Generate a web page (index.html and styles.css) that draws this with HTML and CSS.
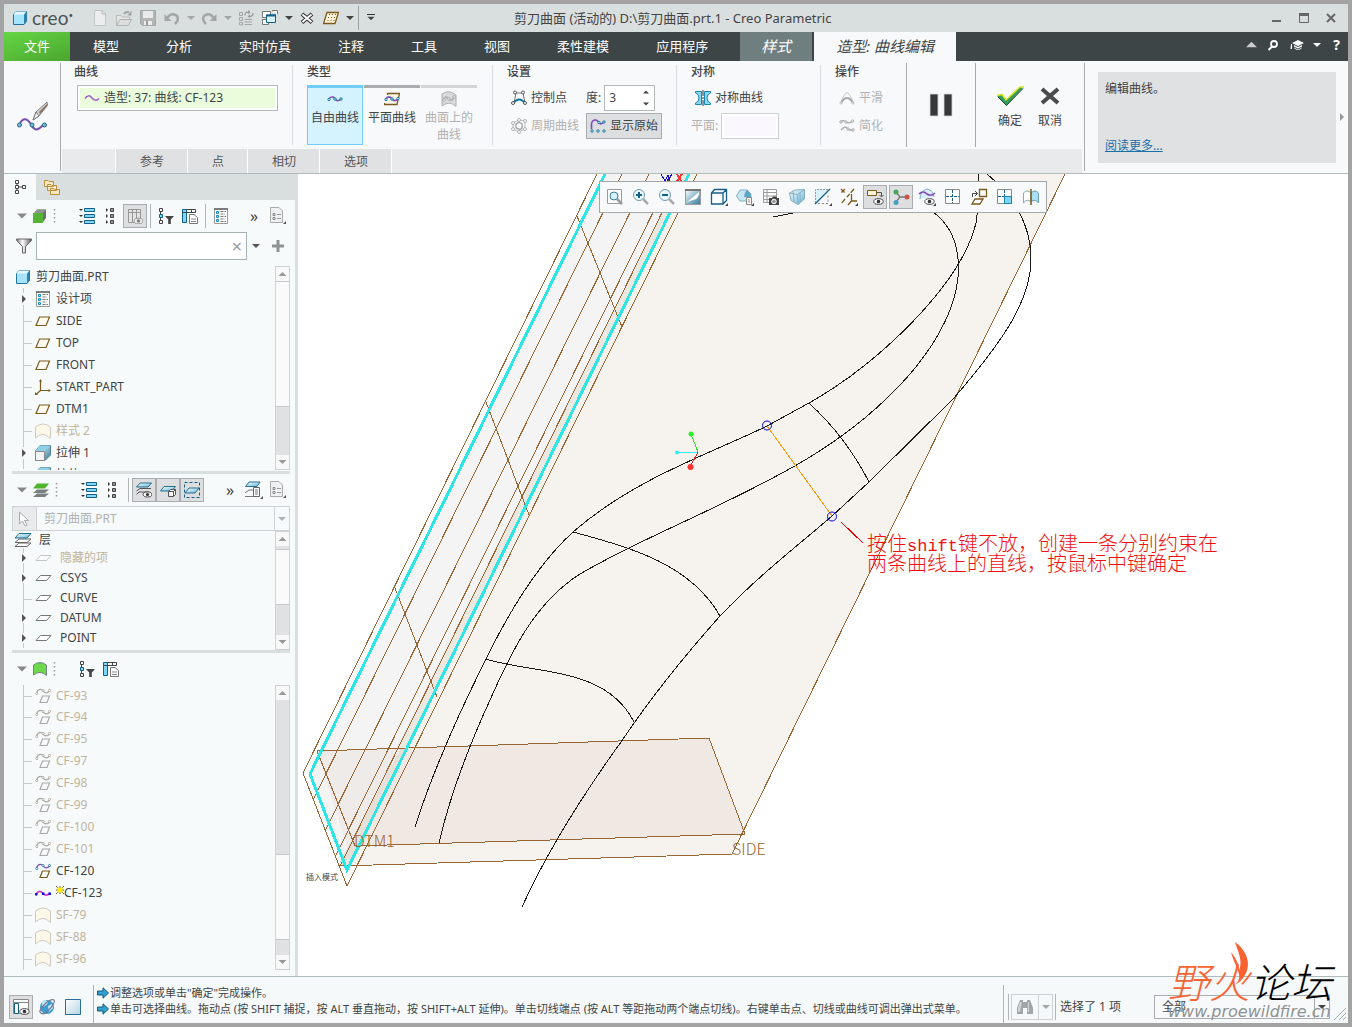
FILE: index.html
```html
<!DOCTYPE html>
<html lang="zh-CN">
<head>
    <meta charset="utf-8">
    <title>剪刀曲面 (活动的) D:\剪刀曲面.prt.1 - Creo Parametric</title>
    <link rel="stylesheet" href="styles.css">
</head>
<body>
    <!-- icon set -->
    <svg class="defs" aria-hidden="true">
        <defs>
            <linearGradient id="g-blue" x1="0" y1="0" x2="1" y2="1"><stop offset="0" stop-color="#fff"/><stop offset="1" stop-color="#5fb4d8"/></linearGradient>
            <linearGradient id="g-soft" x1="0" y1="0" x2="1" y2="1"><stop offset="0" stop-color="#fff"/><stop offset="1" stop-color="#b5d6e4"/></linearGradient>
            <linearGradient id="g-teal" x1="0" y1="0" x2="1" y2="1"><stop offset="0" stop-color="#fff"/><stop offset="1" stop-color="#2c7a9c"/></linearGradient>
            <linearGradient id="g-metal" x1="0" y1="0" x2="1" y2="0"><stop offset="0" stop-color="#777"/><stop offset=".4" stop-color="#fff"/><stop offset="1" stop-color="#555"/></linearGradient>
        </defs>
        <symbol id="i-cube" viewBox="0 0 16 16"><path d="M1.500 4.500L4 1.500H14.500V11.500L12 14.500H1.500Z" fill="#a6e4fb" stroke="#23739b"/><path d="M1.500 4.500L4 1.500H14.500L12 4.500Z" fill="#e6f8ff"/><path d="M12 4.500L14.500 1.500V11.500L12 14.500Z" fill="#2f86ad"/></symbol>
        <symbol id="i-new" viewBox="0 0 16 16"><path d="M2.500 .5H10L13.500 4V15.500H2.500Z" fill="#eceded" stroke="#c3c6c6"/><path d="M10 .5V4H13.500" fill="none" stroke="#b5b8b8"/></symbol>
        <symbol id="i-open" viewBox="0 0 16 16"><path d="M.5 15.500V5.500H5L6.500 7H13.500V9" fill="#e4e5e5" stroke="#b9bbbb"/><path d="M.5 15.500L4 9.500H15.500L12.500 15.500Z" fill="#dcdddd" stroke="#b0b2b2"/><path d="M8 4Q10 1 13 2.500" fill="none" stroke="#a3a5a5" stroke-width="2"/><path d="M11.500 5.500H15.500V.5Z" fill="#a3a5a5"/></symbol>
        <symbol id="i-save" viewBox="0 0 16 16"><path d="M.5 .5H15.500V15.500H2.500L.5 13.500Z" fill="#b4b6b6" stroke="#a5a7a7"/><path d="M3 1H13V8H3Z" fill="#e8e9e9"/><path d="M4 11H12V15H4Z" fill="#eee"/><path d="M6 11H8V15H6Z" fill="#999"/></symbol>
        <symbol id="i-undo" viewBox="0 0 16 16"><path d="M3 8Q8 1.500 13 6Q15.500 10 11 14" fill="none" stroke="#a4a6a6" stroke-width="2.500"/><path d="M.5 4V11H7.500Z" fill="#a4a6a6"/></symbol>
        <symbol id="i-redo" viewBox="0 0 16 16"><path d="M13 8Q8 1.500 3 6Q.5 10 5 14" fill="none" stroke="#a4a6a6" stroke-width="2.500"/><path d="M15.500 4V11H8.500Z" fill="#a4a6a6"/></symbol>
        <symbol id="i-regen" viewBox="0 0 16 16"><g fill="none" stroke="#a3a5a5"><path d="M1.500 2.500H4.500V5.500H1.500ZM1.500 7.500H4.500V10.500H1.500ZM1.500 12.500H4.500V15H1.500ZM6.500 9.500H14M6.500 12H14M6.500 14.500H14"/><path d="M7 5.500Q7 2 10 2M15 3Q15 6.500 11.500 6.500" stroke-width="1.500"/></g><path d="M10 0V4.500L12.500 2ZM12 4.500V8L9.500 6.500Z" fill="#999"/></symbol>
        <symbol id="i-windows" viewBox="0 0 16 16"><path d="M.5 1.500H8.500V7.500H.5ZM.5 9.500H6.500V14.500H.5ZM10 .5H15.500V4" fill="#fff" stroke="#777"/><path d="M4.500 5H13.500V12.500H4.500Z" fill="#d9f3fd" stroke="#155f86"/><path d="M4 5.500H14" stroke="#155f86" stroke-width="2"/></symbol>
        <symbol id="i-closewin" viewBox="0 0 16 16"><path d="M3 4L13 12.500M13 4L3 12.500" stroke="#333" stroke-width="4"/><path d="M3.500 4.500L12.500 12M12.500 4.500L3.500 12" stroke="#fff" stroke-width="2"/></symbol>
        <symbol id="i-datumgrid" viewBox="0 0 16 16"><path d="M4 2.500H15.500L12 13.500H.5Z" fill="#fdf3dc" stroke="#7b5a1d" stroke-width="1.300"/><path d="M6 4.500H14M5 7.500H13M4.500 10.500H12" stroke="#7b5a1d" stroke-dasharray="1 2"/></symbol>
        <symbol id="i-down" viewBox="0 0 8 8"><path d="M0 2H8L4 6Z" fill="currentColor"/></symbol>
        <symbol id="i-right" viewBox="0 0 8 8"><path d="M2 0V8L6 4Z" fill="currentColor"/></symbol>
        <symbol id="i-up" viewBox="0 0 8 8"><path d="M0 6H8L4 2Z" fill="currentColor"/></symbol>

        <symbol id="i-edit" viewBox="0 0 32 32"><path d="M3 24Q8 13 15 23Q19 32 25 26Q27 24 29 23" fill="none" stroke="#7a4fb0" stroke-width="2"/><g fill="#6fc5e3" stroke="#22607e"><circle cx="3.500" cy="24" r="2"/><circle cx="16" cy="24" r="2"/><circle cx="28.500" cy="24" r="2"/></g><path d="M17 19L20 11L31 1L31.500 4L23 15Z" fill="#d0d0d0" stroke="#666" stroke-width=".8"/><path d="M23 11L31 3L31.500 5L24 13Z" fill="#8a7565"/><path d="M17 19L20 11L23 15Z" fill="#f2f2f2" stroke="#666" stroke-width=".8"/></symbol>
        <symbol id="i-wave" viewBox="0 0 16 16"><path d="M1 8.500Q4.500 3.500 8 8Q11.500 12 15 8.500" fill="none" stroke="#9c5ecb" stroke-width="1.500"/></symbol>
        <symbol id="i-free" viewBox="0 0 16 16"><path d="M1.500 8.500Q5 3.500 8 8Q11 11.500 14.500 7.500" fill="none" stroke="#8347c0" stroke-width="1.500"/><g fill="#d8f4ff" stroke="#14789c"><circle cx="2" cy="8.500" r="1.200"/><circle cx="8" cy="8" r="1.200"/><circle cx="14" cy="8" r="1.200"/></g></symbol>
        <symbol id="i-planar" viewBox="0 0 16 16"><path d="M3.500 4V2.500H15.500L13 13.500H.5V12" fill="#fff9e8" stroke="#7b5a1d" stroke-width="1.300"/><path d="M1.500 8.500Q5 3.500 8 8Q11 11.500 14.500 7.500" fill="none" stroke="#8347c0" stroke-width="1.800"/><g fill="#d8f4ff" stroke="#14789c"><circle cx="2" cy="8.500" r="1.200"/><circle cx="8" cy="8" r="1.200"/><circle cx="14" cy="7.500" r="1.200"/></g></symbol>
        <symbol id="i-onsurf" viewBox="0 0 16 16"><path d="M1 3Q8-2 15 4V15.500Q8 9 1 15Z" fill="#dadada" stroke="#b0b0b0"/><path d="M2 10Q4 3 8 8Q11 11 14 5" fill="none" stroke="#aaa" stroke-width="1.500"/><g fill="#fff" stroke="#aaa"><circle cx="3" cy="9" r="1.300"/><circle cx="8" cy="8" r="1.300"/><circle cx="13" cy="6" r="1.300"/></g></symbol>
        <symbol id="i-ctrl" viewBox="0 0 16 16"><path d="M3 13L5 3H12L14 13" fill="none" stroke="#777"/><path d="M2.500 13Q8 6 14 13" fill="none" stroke="#14789c" stroke-width="2"/><g fill="#fff" stroke="#555"><circle cx="4" cy="2.500" r="1.500"/><circle cx="12" cy="2.500" r="1.500"/><circle cx="2" cy="13" r="1.500"/><circle cx="14" cy="13" r="1.500"/></g></symbol>
        <symbol id="i-periodic" viewBox="0 0 16 16"><path d="M8 2L14 3V11L8 14L2 11V5Z" fill="none" stroke="#bbb"/><path d="M5 6Q8 3 11 6Q12 12 8 11Q4 11 5 6" fill="none" stroke="#aaa" stroke-width="1.500"/><g fill="#fff" stroke="#b0b0b0"><circle cx="8" cy="2" r="1.500"/><circle cx="14" cy="3" r="1.500"/><circle cx="14" cy="11" r="1.500"/><circle cx="8" cy="14" r="1.500"/><circle cx="2" cy="11" r="1.500"/><circle cx="2" cy="5" r="1.500"/></g></symbol>
        <symbol id="i-orig" viewBox="0 0 16 16"><path d="M1.500 11V6Q2 1.500 6 2Q8 2.500 9 5Q11 7 14 4" fill="none" stroke="#8347c0" stroke-width="1.600"/><g fill="#d8f4ff" stroke="#14789c"><circle cx="9" cy="4.500" r="1.200"/><circle cx="14" cy="4" r="1.200"/><circle cx="2" cy="13" r="1.200"/><circle cx="8" cy="13" r="1.200"/><circle cx="14" cy="13" r="1.200"/></g></symbol>
        <symbol id="i-sym" viewBox="0 0 16 16"><path d="M.5 1.500H6.500V14.500H.5V13Q4 12 4 8Q4 4 .5 3Z" fill="#8bd6f4" stroke="#1687b4"/><path d="M15.500 1.500H9.500V14.500H15.500V13Q12 12 12 8Q12 4 15.500 3Z" fill="#8bd6f4" stroke="#1687b4"/><path d="M8 0V16" stroke="#333" stroke-dasharray="6 1 2 1"/></symbol>
        <symbol id="i-smooth" viewBox="0 0 16 16"><path d="M1 13L6 4Q8 1 10 4L15 13" fill="none" stroke="#c8c8c8"/><path d="M2 13Q8 3 14 13" fill="none" stroke="#aaa" stroke-width="2"/><circle cx="2" cy="13" r="1.500" fill="#ccc"/><circle cx="14" cy="13" r="1.500" fill="#ccc"/></symbol>
        <symbol id="i-simplify" viewBox="0 0 16 16"><path d="M1 4.500Q4 1 7 4Q10 6 14 3M2 12Q6 7 9 11Q11 13 15 11" fill="none" stroke="#a8a8a8" stroke-width="1.300"/><g fill="#fff" stroke="#a8a8a8"><circle cx="2" cy="4" r="1.200"/><circle cx="7" cy="4" r="1.200"/><circle cx="13.500" cy="3" r="1.200"/><circle cx="9" cy="11" r="1.200"/><circle cx="14" cy="12" r="1.200"/></g></symbol>
        <symbol id="i-pause" viewBox="0 0 24 24"><path d="M1 1H9V23H1ZM15 1H23V23H15Z" fill="#383838" stroke="#d8d8d8" stroke-width=".8"/></symbol>
        <symbol id="i-ok" viewBox="0 0 28 22"><path d="M1 11L6 9L10 15L24 2L27 3L10.500 20.500Z" fill="#349a5e"/><path d="M1 10.500L6 9.500L10 15L24 2H28" fill="none" stroke="#d6e516" stroke-width="1.500"/><path d="M2 12L10.500 20.500L27 3.500" fill="none" stroke="#174d2d"/></symbol>
        <symbol id="i-cancel" viewBox="0 0 28 22"><path d="M6 4L22 18M22 4L6 18" stroke="#4b4b4b" stroke-width="4"/></symbol>
        <symbol id="i-search" viewBox="0 0 16 16"><circle cx="9" cy="7" r="3" fill="none" stroke="#fff" stroke-width="1.800"/><path d="M7 9.500L3.500 13" stroke="#fff" stroke-width="2"/></symbol>
        <symbol id="i-grad" viewBox="0 0 16 16"><path d="M9 3L15 6L9 9L3 6ZM5 8L9 10L13 8V11Q9 15 5 11ZM2 7H3V12H1.500Z" fill="#fff"/><path d="M5 10L9 12L13 10" fill="none" stroke="#3d4546"/></symbol>

        <symbol id="i-tree" viewBox="0 0 16 16"><path d="M5 5V11M7 8H11" stroke="#444"/><path d="M3.500 1.500H6.500V4.500H3.500ZM3.500 6.500H6.500V9.500H3.500ZM3.500 11.500H6.500V14.500H3.500ZM10.500 6.500H13.500V9.500H10.500Z" fill="#fff" stroke="#444"/></symbol>
        <symbol id="i-folders" viewBox="0 0 16 16"><path d="M.5 1.500H4L5 2.500H9.500V7.500H.5ZM3.500 5.500H7L8 6.500H12.500V11.500H3.500ZM6.500 9.500H9.500L10.500 10.500H15.500V15.500H6.500Z" fill="#fbe8c0" stroke="#bb8d3d"/></symbol>
        <symbol id="i-part" viewBox="0 0 16 16"><path d="M5 1.500H14V10L11 14V6H2Z" fill="#6b7271"/><path d="M5 1.500H14L11 5H2Z" fill="#8d9594"/><path d="M1 5H11V15H1Z" fill="#55b235"/></symbol>
        <symbol id="i-dots" viewBox="0 0 4 16"><path d="M2.500 1V15" stroke="#999" stroke-width="1.500" stroke-dasharray="1.500 2.500"/></symbol>
        <symbol id="i-expand" viewBox="0 0 16 16"><path d="M5.500 .5H15.500V3.500H5.500ZM5.500 6.500H15.500V9.500H5.500ZM5.500 12.500H15.500V15.500H5.500Z" fill="#7fd6f7" stroke="#145f86"/><path d="M0 1H4L2 3ZM0 7H4L2 9ZM0 13H4L2 15Z" fill="#333"/></symbol>
        <symbol id="i-collapse" viewBox="0 0 16 16"><path d="M7.500 .5H10.500V3.500H7.500ZM7.500 6.500H10.500V9.500H7.500ZM7.500 12.500H10.500V15.500H7.500Z" fill="#999" stroke="#444"/><path d="M3 0L5 2L3 4ZM3 6L5 8L3 10ZM3 12L5 14L3 16Z" fill="#333"/></symbol>
        <symbol id="i-columns" viewBox="0 0 16 16"><path d="M1.500 1.500H13.500V14.500H1.500ZM1.500 4.500H13.500M5.500 1.500V14.500M9.500 1.500V14.500" fill="#e3e3e3" stroke="#999"/><ellipse cx="11.500" cy="13" rx="4.500" ry="2.800" fill="#eee" stroke="#999"/><circle cx="11.500" cy="13" r="1.800" fill="#888"/></symbol>
        <symbol id="i-treefilter" viewBox="0 0 16 16"><path d="M2.500 3V13" stroke="#444"/><path d="M1.500 .5H4.500V3.500H1.500ZM1.500 12.500H4.500V15.500H1.500Z" fill="#fff" stroke="#444"/><path d="M1.500 6.500H4.500V9.500H1.500Z" fill="#7fd6f7" stroke="#145f86"/><path d="M7 8H16L12.800 11.500V16H10.200V11.500Z" fill="#444"/></symbol>
        <symbol id="i-treecols" viewBox="0 0 16 16"><path d="M.5 1.500H4.500V14.500H.5Z" fill="#7fd6f7" stroke="#145f86"/><path d="M4.500 1.500H13.500V4.500H4.500M9.500 1.500V4.500M.5 4.500H4.500" fill="none" stroke="#444"/><path d="M7.500 6.500H12L15.500 9.500V15.500H7.500Z" fill="#fff" stroke="#777"/><path d="M9 11H14M9 13.500H14" stroke="#888"/></symbol>
        <symbol id="i-list" viewBox="0 0 16 16"><path d="M1.500 1V15.500H14.500V1" fill="#fff" stroke="#999"/><path d="M1 1H15" stroke="#555" stroke-width="1.500"/><path d="M3.500 3.500H5.500V5.500H3.500ZM3.500 7.500H5.500V9.500H3.500ZM3.500 11.500H5.500V13.500H3.500Z" fill="#bfe9fa" stroke="#1687c0"/><path d="M7.500 3.500H13M7.500 6H12M7.500 8.500H13M7.500 11H12M7.500 13.500H13" stroke="#777" stroke-dasharray="3 1"/></symbol>
        <symbol id="i-doc" viewBox="0 0 18 18"><path d="M1.500 .5H10L13.500 4V15.500H1.500Z" fill="#eef0f1" stroke="#aaa"/><path d="M4 6.500H6V8.500H4ZM4 10.500H6V12.500H4Z" fill="none" stroke="#888"/><path d="M8 7.500H12M8 11.500H12" stroke="#999"/><path d="M17 14V17H14Z" fill="#555"/></symbol>
        <symbol id="i-funnel" viewBox="0 0 16 16"><path d="M.5 1H15.500V2.500L9.500 8.500V15H6.500V8.500L.5 2.500Z" fill="url(#g-metal)" stroke="#666"/></symbol>
        <symbol id="i-plus" viewBox="0 0 12 12"><path d="M4.500 0H7.500V4.500H12V7.500H7.500V12H4.500V7.500H0V4.500H4.500Z" fill="#8f9292"/></symbol>
        <symbol id="i-plane" viewBox="0 0 16 16"><path d="M4.500 4H14.500L11 12.500H1Z" fill="#fffaf0" stroke="#7b5a1d" stroke-width="1.200"/></symbol>
        <symbol id="i-csys" viewBox="0 0 16 16"><path d="M5.500 1V11.500H15M5.500 11.500L1 15.500" fill="none" stroke="#7b5a1d" stroke-width="1.200"/><path d="M4 2.500L5.500 0L7 2.500ZM13.500 10L16 11.500L13.500 13ZM0 13V16H3Z" fill="#7b5a1d"/></symbol>
        <symbol id="i-surf" viewBox="0 0 16 16"><path d="M.5 4Q8-2 15.500 4V15.500Q8 7.500 .5 15Z" fill="#fdf7ea" stroke="#cfcabf"/></symbol>
        <symbol id="i-extrude" viewBox="0 0 16 16"><path d="M.5 6L5 .5H15.500V10L10 15.500H.5Z" fill="url(#g-teal)" stroke="#5a7f90"/><path d="M5 .5H15.500L10 6H.5Z" fill="#8fd0ea"/><path d="M.5 6.500H9.500V15.500H.5Z" fill="#f4f4f4" stroke="#888"/></symbol>
        <symbol id="i-layers" viewBox="0 0 18 16"><path d="M1 14.500L5 11H17L13 14.500ZM1 10.500L5 7H17L13 10.500Z" fill="#fff" stroke="#666"/><path d="M1 6L5 1.500H17L13 6Z" fill="url(#g-blue)" stroke="#29708f"/></symbol>
        <symbol id="i-layer" viewBox="0 0 18 16"><path d="M1 10.500L5.500 5.500H16L11.500 10.500Z" fill="#fff" stroke="#777"/></symbol>
        <symbol id="i-layersgreen" viewBox="0 0 18 16"><path d="M1 15L5 11.500H17L13 15ZM1 11L5 7.500H17L13 11Z" fill="#7b8180"/><path d="M1 6.500L5 1.500H17L13 6.500Z" fill="#4eb52d"/></symbol>
        <symbol id="i-layereye" viewBox="0 0 16 16"><path d="M.5 12.500L3 10H13M.5 9L4 6.500H15" fill="none" stroke="#555"/><path d="M.5 5L4 1H15.500L12 5Z" fill="url(#g-blue)" stroke="#29708f"/><ellipse cx="11.500" cy="12.500" rx="4.300" ry="2.500" fill="#fff" stroke="#444"/><circle cx="11.500" cy="12.500" r="1.600" fill="#333"/></symbol>
        <symbol id="i-layerbox" viewBox="0 0 16 16"><path d="M.5 9L4 4.500H15.500L12 9Z" fill="url(#g-blue)" stroke="#29708f"/><path d="M8.500 9.500L10.500 7.500H15.500V12.500L13.500 14.500H8.500ZM8.500 9.500H13.500V14.500M13.500 9.500L15.500 7.500" fill="#f4f4f4" stroke="#555"/></symbol>
        <symbol id="i-layersel" viewBox="0 0 16 16"><path d="M.5 .5H15.500V15.500H.5Z" fill="none" stroke="#145f86" stroke-dasharray="3 2"/><path d="M1 11L5 6H15L11 11Z" fill="url(#g-blue)" stroke="#29708f"/></symbol>
        <symbol id="i-layerdoc" viewBox="0 0 18 18"><path d="M0 15.500H9M0 12L4 9H9" fill="none" stroke="#777"/><path d="M.5 5.500L4 1H15L12 5.500Z" fill="url(#g-blue)" stroke="#29708f"/><path d="M8.500 6.500H14.500V15.500H8.500Z" fill="#fff" stroke="#666"/><path d="M10 9H13M10 11H13M10 13H13" stroke="#777"/><path d="M18 15V18H15Z" fill="#555"/></symbol>
        <symbol id="i-cursor" viewBox="0 0 16 16"><path d="M2.500 1V13L5.500 10L8 15L10 14L7.500 9.500H11.500Z" fill="#fff" stroke="#aaa"/></symbol>
        <symbol id="i-surfgreen" viewBox="0 0 16 16"><path d="M1.500 4Q8-1 14.500 4V14.500Q8 8.500 1.500 14Z" fill="#6dd84c" stroke="#6f8580"/></symbol>
        <symbol id="i-curve" viewBox="0 0 16 16"><path d="M1.500 5Q3 1 6 1.500Q8 2 9 4Q12 6 14.500 3" fill="none" stroke="var(--line)" stroke-width="1.200"/><g fill="#fff" stroke="var(--knot)" stroke-width=".8"><circle cx="1.800" cy="5.500" r="1.100"/><circle cx="8" cy="2.500" r="1.100"/><circle cx="14.500" cy="2.500" r="1.100"/></g><path d="M7.500 8H14.500L12 14.500H5Z" fill="none" stroke="var(--plane)" stroke-width="1.200"/></symbol>
        <symbol id="i-curve2" viewBox="0 0 16 16"><path d="M1 9Q5 4 8 8.500Q11 12 15 8" fill="none" stroke="#d33bc7" stroke-width="1.800"/><path d="M0 8H2.500V10.500H0ZM7 7.500H9.500V10H7ZM13.500 7.500H16V10H13.500Z" fill="#1414e6"/></symbol>
        <symbol id="i-star" viewBox="0 0 8 8"><path d="M0 0L8 8M8 0L0 8M4 0V8M0 4H8" stroke="#333" stroke-width=".8"/><path d="M1.500 1.500H6.500V6.500H1.500Z" fill="#ffea00"/></symbol>

        <!-- in-graphics toolbar -->
        <symbol id="i-refit" viewBox="0 0 18 18"><path d="M1.500 1.500H15.500V15.500H1.500Z" fill="#fff" stroke="#999"/><circle cx="8" cy="8" r="4" fill="#d9f1fb" stroke="#3c7c98"/><path d="M11 11L16 16" stroke="#999" stroke-width="2.500"/></symbol>
        <symbol id="i-zoomin" viewBox="0 0 18 18"><circle cx="7" cy="7" r="5.500" fill="#e9f7fd" stroke="#6d9bae"/><path d="M4 7H10M7 4V10" stroke="#145f86" stroke-width="2"/><path d="M11 11L16 16" stroke="#aaa" stroke-width="2.500"/></symbol>
        <symbol id="i-zoomout" viewBox="0 0 18 18"><circle cx="7" cy="7" r="5.500" fill="#e9f7fd" stroke="#6d9bae"/><path d="M4 7H10" stroke="#145f86" stroke-width="2"/><path d="M11 11L16 16" stroke="#aaa" stroke-width="2.500"/></symbol>
        <symbol id="i-repaint" viewBox="0 0 18 18"><path d="M1.500 1.500H16.500V16.500H1.500Z" fill="url(#g-teal)" stroke="#999"/><path d="M1 1H17V3H1Z" fill="#777"/><path d="M2 15L15 4Q15 11 9 12Q5 13 2 15" fill="#fff"/></symbol>
        <symbol id="i-shade" viewBox="0 0 18 18"><path d="M1.500 5L4.500 1.500H16.500V12.500L13 16H1.500ZM1.500 5H13V16M13 5L16.500 1.500" fill="#fff" stroke="#145f86" stroke-width="1.300"/><path d="M18 15V18H15Z" fill="#444"/></symbol>
        <symbol id="i-views" viewBox="0 0 18 18"><path d="M.5 8L4 2H11L15 6V11L11 13H4Z" fill="#c9e7f3" stroke="#7fb0c4"/><path d="M11 1.500Q15 5 15 9H8Q8 5 11 1.500Z" fill="#5ba7c8"/><path d="M10.500 9.500H15.500V16.500H10.500Z" fill="#fff" stroke="#888"/><path d="M12 12H14M12 14H14" stroke="#888"/><path d="M18 15V18H15Z" fill="#444"/></symbol>
        <symbol id="i-viewmgr" viewBox="0 0 18 18"><path d="M1.500 1.500H14.500V14.500H1.500ZM1.500 4.500H14.500M1.500 8H14.500M1.500 11.500H14.500M5 1.500V14.500" fill="#fff" stroke="#999"/><path d="M7 10H10L11 8.500H14L15 10H17V17H7Z" fill="#444"/><circle cx="12" cy="13.500" r="2.300" fill="#999" stroke="#fff"/></symbol>
        <symbol id="i-persp" viewBox="0 0 18 18"><path d="M1.500 5L7 2L16.500 1.500V11L10 16.500L3 12.500Z" fill="url(#g-blue)" stroke="#86afc0"/><path d="M1.500 5L9.500 6.500L16.500 1.500M9.500 6.500L10 16.500M5 3L6 14M12 5V14" fill="none" stroke="#86afc0"/></symbol>
        <symbol id="i-section" viewBox="0 0 18 18"><path d="M1.500 1.500H16L1.500 15.500Z" fill="#d9f1fb"/><path d="M1.500 15V1.500H16" fill="none" stroke="#999" stroke-dasharray="2 1"/><path d="M1 16L16 1" stroke="#145f86" stroke-width="1.200"/><path d="M4 15.500H14V6" fill="none" stroke="#888" stroke-dasharray="2 2"/><path d="M18 15V18H15Z" fill="#444"/></symbol>
        <symbol id="i-datums" viewBox="0 0 18 18"><path d="M1 1L5 5M5 1L1 5M14 1L7 9M5 11L1 16" stroke="#7b5a1d" stroke-width="1.300" stroke-dasharray="5 1.500"/><path d="M11.500 6V13H17M11.500 13L8 17" fill="none" stroke="#7b5a1d" stroke-width="1.300"/><path d="M18 15V18H15Z" fill="#444"/></symbol>
        <symbol id="i-annot" viewBox="0 0 18 18"><path d="M1.500 2.500H10.500V7.500H1.500Z" fill="#fff3d8" stroke="#7b5a1d"/><path d="M11 4.500H15.500V8M13.500 7L15.500 9L17.500 7" fill="none" stroke="#555"/><ellipse cx="12.500" cy="13.500" rx="4.700" ry="2.800" fill="#fff" stroke="#444"/><circle cx="12.500" cy="13.500" r="1.800" fill="#333"/></symbol>
        <symbol id="i-spin" viewBox="0 0 18 18"><path d="M4 4L8 9H14M8 9L4 14" fill="none" stroke="#777" stroke-width="1.300"/><circle cx="4" cy="4" r="2.500" fill="#4aa556"/><circle cx="15" cy="9" r="2.500" fill="#c95448"/><circle cx="4" cy="14.500" r="2.500" fill="#45a0c4"/></symbol>
        <symbol id="i-styleeye" viewBox="0 0 18 18"><path d="M2 11Q2 3 9 1Q15 2 16 9" fill="#d9eef8" stroke="#7fb0c4"/><path d="M1 6Q5 2 9 6Q13 9 17 5" fill="none" stroke="#8347c0" stroke-width="1.600"/><ellipse cx="11.500" cy="13.500" rx="4.700" ry="2.800" fill="#fff" stroke="#444"/><circle cx="11.500" cy="13.500" r="1.800" fill="#333"/><path d="M18 15V18H15Z" fill="#444"/></symbol>
        <symbol id="i-grid" viewBox="0 0 18 18"><path d="M1.500 1.500H15.500V15.500H1.500Z" fill="#fff" stroke="#888"/><path d="M8.500 2V15M2 8.500H15" stroke="#145f86" stroke-dasharray="3 1"/></symbol>
        <symbol id="i-orient" viewBox="0 0 18 18"><path d="M9.500 1.500H16.500V8.500H9.500Z" fill="#fff" stroke="#7b5a1d" stroke-width="1.300"/><path d="M5 11H13L10 16H2Z" fill="#fff" stroke="#7b5a1d" stroke-width="1.300"/><path d="M2.500 9V5.500H7M5 3L7.500 5.500L5 8" fill="none" stroke="#444"/></symbol>
        <symbol id="i-fourview" viewBox="0 0 18 18"><path d="M1.500 1.500H15.500V15.500H1.500Z" fill="#fff" stroke="#888"/><path d="M8.500 8.500H15.500V15.500H8.500Z" fill="#7fd6f7" stroke="#1687b4"/><path d="M8.500 2V8M2 8.500H8" stroke="#145f86" stroke-dasharray="3 1"/></symbol>
        <symbol id="i-mirror" viewBox="0 0 18 18"><path d="M9 5Q5 1 1.500 5V15Q5 10 9 14Z" fill="#fff" stroke="#8aa"/><path d="M9 5Q13 1 16.500 5V15Q13 10 9 14Z" fill="#a6e0f6" stroke="#6d9bae"/><path d="M9 1V17" stroke="#7b5a1d" stroke-width="1.500"/></symbol>

        <symbol id="i-navpane" viewBox="0 0 18 18"><path d="M1.500 1.500H16.500V15.500H1.500Z" fill="#fff" stroke="#888"/><path d="M1.500 4.500H16.500" stroke="#888"/><path d="M2.500 5.500H6.500V15.500H2.500Z" fill="#fff" stroke="#145f86"/><ellipse cx="12.500" cy="13.500" rx="4.700" ry="2.800" fill="#fff" stroke="#444"/><circle cx="12.500" cy="13.500" r="1.800" fill="#333"/></symbol>
        <symbol id="i-globe" viewBox="0 0 18 18"><circle cx="9" cy="9" r="7" fill="#3a9ccf"/><path d="M4 4L8 2L10 5L7 8L4 9ZM10 8L14 6L15 10L11 14Z" fill="#c7e8f6"/><path d="M3 15Q0 14 5 8Q12 0 16 2Q18 5 9 14Q5 17 3 15" fill="none" stroke="#778" stroke-width="1.200"/></symbol>
        <symbol id="i-arrow" viewBox="0 0 12 12"><path d="M.5 4H6V.8L11.500 6L6 11.200V8H.5Z" fill="#33a1cf" stroke="#125a80"/></symbol>
        <symbol id="i-binoc" viewBox="0 0 18 18"><path d="M4 2H7V4H11V2H14L17 10V16H11V10H7V16H1V10Z" fill="#a2a5a6"/><path d="M4 4H6L4 14H2V10ZM12 4H13V14H11.500Z" fill="#cfd2d3"/></symbol>
    </svg>

    <div class="window">
        <header class="titlebar">
            <svg class="icon"><use href="#i-cube"/></svg>
            <span class="brand">creo<sup>•</sup></span>
            <div class="quick">
                <button aria-label="新建"><svg class="icon"><use href="#i-new"/></svg></button>
                <button aria-label="打开"><svg class="icon"><use href="#i-open"/></svg></button>
                <button aria-label="保存"><svg class="icon"><use href="#i-save"/></svg></button>
                <button aria-label="撤消"><svg class="icon"><use href="#i-undo"/></svg></button>
                <button class="drop off" aria-label="撤消列表"><svg><use href="#i-down"/></svg></button>
                <button aria-label="重做"><svg class="icon"><use href="#i-redo"/></svg></button>
                <button class="drop off" aria-label="重做列表"><svg><use href="#i-down"/></svg></button>
                <button aria-label="重新生成"><svg class="icon"><use href="#i-regen"/></svg></button>
                <button aria-label="窗口"><svg class="icon"><use href="#i-windows"/></svg></button>
                <button class="drop" aria-label="窗口列表"><svg><use href="#i-down"/></svg></button>
                <button aria-label="关闭"><svg class="icon"><use href="#i-closewin"/></svg></button>
                <button aria-label="基准"><svg class="icon"><use href="#i-datumgrid"/></svg></button>
                <button class="drop" aria-label="基准列表"><svg><use href="#i-down"/></svg></button>
                <button class="drop custom" aria-label="自定义"><svg><use href="#i-down"/></svg></button>
            </div>
            <h1>剪刀曲面 (活动的) D:\剪刀曲面.prt.1 - Creo Parametric</h1>
            <div class="winbtns">
                <button aria-label="最小化"><svg viewBox="0 0 12 12"><path d="M1 9H10" stroke="#666" stroke-width="2"/></svg></button>
                <button aria-label="最大化"><svg viewBox="0 0 12 12"><path d="M1.500 2V10.500H10.500V2" fill="none" stroke="#666"/><path d="M1 2.500H11" stroke="#666" stroke-width="3"/></svg></button>
                <button aria-label="关闭窗口"><svg viewBox="0 0 12 12"><path d="M2 2L10 10M10 2L2 10" stroke="#666" stroke-width="2"/></svg></button>
            </div>
        </header>

        <nav class="tabs">
            <a class="file" href="#">文件</a>
            <a href="#">模型</a>
            <a href="#">分析</a>
            <a href="#">实时仿真</a>
            <a href="#">注释</a>
            <a href="#">工具</a>
            <a href="#">视图</a>
            <a href="#">柔性建模</a>
            <a href="#">应用程序</a>
            <a class="style" href="#">样式</a>
            <a class="current" href="#">造型: 曲线编辑</a>
            <div class="help-icons">
                <svg><use href="#i-up"/></svg>
                <svg class="icon"><use href="#i-search"/></svg>
                <svg class="icon"><use href="#i-grad"/></svg>
                <svg class="small"><use href="#i-down"/></svg>
                <b>?</b>
            </div>
        </nav>

        <section class="ribbon">
            <div class="tool-icon"><svg><use href="#i-edit"/></svg></div>
            <div class="dash">
                <div class="groups">
                    <div class="group g-curve">
                        <h2>曲线</h2>
                        <button class="collector"><svg class="icon"><use href="#i-wave"/></svg>造型: 37: 曲线: CF-123</button>
                    </div>
                    <div class="group g-type">
                        <h2>类型</h2>
                        <div class="types">
                            <button class="on"><svg class="icon"><use href="#i-free"/></svg>自由曲线</button>
                            <button><svg class="icon"><use href="#i-planar"/></svg>平面曲线</button>
                            <button disabled><svg class="icon"><use href="#i-onsurf"/></svg>曲面上的曲线</button>
                        </div>
                    </div>
                    <div class="group g-set">
                        <h2>设置</h2>
                        <div class="set-grid">
                            <button class="cmd"><svg class="icon"><use href="#i-ctrl"/></svg>控制点</button>
                            <label class="degree">度: <span class="spin"><input type="text" value="3"><span class="steps"><svg><use href="#i-up"/></svg><svg><use href="#i-down"/></svg></span></span></label>
                            <button class="cmd" disabled><svg class="icon"><use href="#i-periodic"/></svg>周期曲线</button>
                            <button class="cmd pressed"><svg class="icon"><use href="#i-orig"/></svg>显示原始</button>
                        </div>
                    </div>
                    <div class="group g-sym">
                        <h2>对称</h2>
                        <button class="cmd"><svg class="icon"><use href="#i-sym"/></svg>对称曲线</button>
                        <label class="plane">平面: <input type="text" disabled></label>
                    </div>
                    <div class="group g-op">
                        <h2>操作</h2>
                        <button class="cmd" disabled><svg class="icon"><use href="#i-smooth"/></svg>平滑</button>
                        <button class="cmd" disabled><svg class="icon"><use href="#i-simplify"/></svg>简化</button>
                    </div>
                    <div class="pause"><button aria-label="暂停"><svg><use href="#i-pause"/></svg></button></div>
                    <div class="finish">
                        <button><svg><use href="#i-ok"/></svg>确定</button>
                        <button><svg><use href="#i-cancel"/></svg>取消</button>
                    </div>
                </div>
                <div class="subtabs">
                    <a href="#">参考</a>
                    <a href="#">点</a>
                    <a href="#">相切</a>
                    <a href="#">选项</a>
                </div>
            </div>
            <aside class="tip">
                <div class="tip-box">
                    <p>编辑曲线。</p>
                    <a href="#">阅读更多...</a>
                </div>
                <svg><use href="#i-right"/></svg>
            </aside>
        </section>

        <main class="work">
            <div class="sidebar">
                <div class="navtabs">
                    <button class="on" aria-label="模型树"><svg class="icon"><use href="#i-tree"/></svg></button>
                    <button aria-label="文件夹"><svg class="icon"><use href="#i-folders"/></svg></button>
                </div>

                <section class="panel model">
                    <div class="bar">
                        <button class="fold" aria-label="折叠"><svg><use href="#i-down"/></svg></button>
                        <svg class="icon"><use href="#i-part"/></svg>
                        <svg class="dots"><use href="#i-dots"/></svg>
                        <button aria-label="展开"><svg class="icon"><use href="#i-expand"/></svg></button>
                        <button aria-label="收起"><svg class="icon"><use href="#i-collapse"/></svg></button>
                        <button class="pressed" aria-label="列"><svg class="icon"><use href="#i-columns"/></svg></button>
                        <i></i>
                        <button aria-label="树过滤器"><svg class="icon"><use href="#i-treefilter"/></svg></button>
                        <button aria-label="树列"><svg class="icon"><use href="#i-treecols"/></svg></button>
                        <i></i>
                        <button aria-label="列表"><svg class="icon"><use href="#i-list"/></svg></button>
                        <button class="more">»</button>
                        <button aria-label="设置"><svg class="icon18"><use href="#i-doc"/></svg></button>
                    </div>
                    <div class="filter">
                        <svg class="icon"><use href="#i-funnel"/></svg>
                        <div class="filter-box"><input type="text" aria-label="过滤"><button aria-label="清除">×</button></div>
                        <svg class="small"><use href="#i-down"/></svg>
                        <svg class="plus"><use href="#i-plus"/></svg>
                    </div>
                    <div class="scroll">
                        <ul class="tree">
                            <li class="root"><svg class="icon"><use href="#i-cube"/></svg>剪刀曲面.PRT</li>
                            <li class="open"><svg class="icon"><use href="#i-list"/></svg>设计项</li>
                            <li><svg class="icon"><use href="#i-plane"/></svg>SIDE</li>
                            <li><svg class="icon"><use href="#i-plane"/></svg>TOP</li>
                            <li><svg class="icon"><use href="#i-plane"/></svg>FRONT</li>
                            <li><svg class="icon"><use href="#i-csys"/></svg>START_PART</li>
                            <li><svg class="icon"><use href="#i-plane"/></svg>DTM1</li>
                            <li class="hidden"><svg class="icon"><use href="#i-surf"/></svg>样式 2</li>
                            <li class="open"><svg class="icon"><use href="#i-extrude"/></svg>拉伸 1</li>
                            <li class="open"><svg class="icon"><use href="#i-extrude"/></svg>拉伸 2</li>
                        </ul>
                        <div class="sb sb-model"><svg><use href="#i-up"/></svg><span></span><svg><use href="#i-down"/></svg></div>
                    </div>
                </section>

                <section class="panel layers">
                    <div class="bar">
                        <button class="fold" aria-label="折叠"><svg><use href="#i-down"/></svg></button>
                        <svg class="icon18"><use href="#i-layersgreen"/></svg>
                        <svg class="dots"><use href="#i-dots"/></svg>
                        <button aria-label="展开"><svg class="icon"><use href="#i-expand"/></svg></button>
                        <button aria-label="收起"><svg class="icon"><use href="#i-collapse"/></svg></button>
                        <i></i>
                        <button class="pressed" aria-label="显示层"><svg class="icon"><use href="#i-layereye"/></svg></button>
                        <button class="pressed" aria-label="层项"><svg class="icon"><use href="#i-layerbox"/></svg></button>
                        <button class="pressed" aria-label="选择层"><svg class="icon"><use href="#i-layersel"/></svg></button>
                        <button class="more">»</button>
                        <button aria-label="层操作"><svg class="icon18"><use href="#i-layerdoc"/></svg></button>
                        <button aria-label="设置"><svg class="icon18"><use href="#i-doc"/></svg></button>
                    </div>
                    <div class="model-pick">
                        <button disabled aria-label="选取"><svg class="icon"><use href="#i-cursor"/></svg></button>
                        <select disabled aria-label="模型"><option>剪刀曲面.PRT</option></select>
                        <svg class="small"><use href="#i-down"/></svg>
                    </div>
                    <div class="scroll">
                        <ul class="tree dense">
                            <li class="root"><svg class="icon18"><use href="#i-layers"/></svg>层</li>
                            <li class="open hidden"><svg class="icon18"><use href="#i-layer"/></svg>隐藏的项</li>
                            <li class="open"><svg class="icon18"><use href="#i-layer"/></svg>CSYS</li>
                            <li><svg class="icon18"><use href="#i-layer"/></svg>CURVE</li>
                            <li class="open"><svg class="icon18"><use href="#i-layer"/></svg>DATUM</li>
                            <li class="open"><svg class="icon18"><use href="#i-layer"/></svg>POINT</li>
                        </ul>
                        <div class="sb sb-layers"><svg><use href="#i-up"/></svg><span></span><svg><use href="#i-down"/></svg></div>
                    </div>
                </section>

                <section class="panel styles">
                    <div class="bar">
                        <button class="fold" aria-label="折叠"><svg><use href="#i-down"/></svg></button>
                        <svg class="icon"><use href="#i-surfgreen"/></svg>
                        <svg class="dots"><use href="#i-dots"/></svg>
                        <button aria-label="树过滤器"><svg class="icon"><use href="#i-treefilter"/></svg></button>
                        <button aria-label="树列"><svg class="icon"><use href="#i-treecols"/></svg></button>
                    </div>
                    <div class="scroll">
                        <ul class="tree">
                            <li class="hidden cut"><svg class="icon"><use href="#i-curve"/></svg>CF-93</li>
                            <li class="hidden"><svg class="icon"><use href="#i-curve"/></svg>CF-94</li>
                            <li class="hidden"><svg class="icon"><use href="#i-curve"/></svg>CF-95</li>
                            <li class="hidden"><svg class="icon"><use href="#i-curve"/></svg>CF-97</li>
                            <li class="hidden"><svg class="icon"><use href="#i-curve"/></svg>CF-98</li>
                            <li class="hidden"><svg class="icon"><use href="#i-curve"/></svg>CF-99</li>
                            <li class="hidden"><svg class="icon"><use href="#i-curve"/></svg>CF-100</li>
                            <li class="hidden"><svg class="icon"><use href="#i-curve"/></svg>CF-101</li>
                            <li><svg class="icon"><use href="#i-curve"/></svg>CF-120</li>
                            <li><svg class="icon"><use href="#i-curve2"/></svg><svg class="star"><use href="#i-star"/></svg>CF-123</li>
                            <li class="hidden"><svg class="icon"><use href="#i-surf"/></svg>SF-79</li>
                            <li class="hidden"><svg class="icon"><use href="#i-surf"/></svg>SF-88</li>
                            <li class="hidden"><svg class="icon"><use href="#i-surf"/></svg>SF-96</li>
                        </ul>
                        <div class="sb sb-styles"><svg><use href="#i-up"/></svg><span></span><svg><use href="#i-down"/></svg></div>
                    </div>
                </section>
            </div>

            <div class="canvas">
                <svg class="scene">
                    <g transform="translate(-298 -174)" shape-rendering="crispEdges" fill="none">
                        <!-- datum planes -->
                        <path d="M653 230L681 174H1065L732 854L340 866Z" fill="#f6f3ee"/>
                        <path d="M605 174L310 774L347 870L689 174Z" fill="#f4f4f5"/>
                        <path d="M681 174H689L347 870L340 862Z" fill="#ebe7e1"/>
                        <path d="M317 751L709 738L745 834L355 846Z" fill="#f0e9e3"/>
                        <path d="M317 751L412 748L348 850Z" fill="#eeebe9"/>
                        <path d="M401 748H406L353 858L340 862Z" fill="#e6e0d9"/>
                        <g stroke="#996633">
                            <path d="M597 174L303 773L347 886L697 174"/>
                            <path d="M622 174L313 800M649 174L326 829M672 174L335 857M681 174L340 866"/>
                            <path d="M340 866L732 854L1065 174"/>
                            <path d="M317 751L709 738L745 834L355 846Z"/>
                            <path d="M577 216L622 327M486 402L529 515M395 588L437 697"/>
                        </g>
                        <path d="M605 174L310 774L347 870L689 174" stroke="#2ce6e6" stroke-width="3"/>
                        <path d="M661 174L665 181L668 175L670 181M667 181L672 174" stroke="#0a0ad2"/>
                        <path d="M677 174L681 181M682 174L677 181" stroke="#f33" stroke-width="2"/>

                        <!-- style curves -->
                        <g stroke="#1a1a1a">
                            <path d="M415 827C428 786 450 731 486 659C509 612 540 562 573 532C635 478 712 453 767 426L809 403C878 364 961 285 976 223Q980 196 978 174"/>
                            <path d="M439 843C449 799 469 746 490 700C513 648 536 602 580 574C645 536 709 514 793 467C857 431 925 374 950 310C964 274 962 233 933 212"/>
                            <path d="M522 907Q556 832 621 742Q662 681 720 616C760 574 800 544 832 516L869 482L954 398C1003 341 1031 301 1031 258C1031 225 1013 195 987 174"/>
                            <path d="M773 217L793 213M573 532C628 547 690 563 720 616M486 659C532 674 606 666 634 722M809 403Q846 437 869 482"/>
                        </g>

                        <path d="M767 426L832 516" stroke="#ff9b00"/>
                        <g stroke="#0000e0" shape-rendering="auto"><circle cx="767" cy="425.500" r="4.500"/><circle cx="832" cy="516.500" r="4.500"/></g>
                        <path d="M841 522L863 543" stroke="#e00000"/>
                        <path d="M698 452L677 452" stroke="#2cf0f0"/>
                        <path d="M698 452L691 434" stroke="#22e022"/>
                        <path d="M698 452L690 467" stroke="#e22"/>
                        <g shape-rendering="auto"><circle cx="677" cy="452.500" r="2" fill="#2cf0f0"/><circle cx="691" cy="434" r="2.500" fill="#2cf02c"/><circle cx="690.500" cy="467" r="3" fill="#f33"/></g>

                        <text class="datum" x="354" y="847">DTM1</text>
                        <text class="datum" x="732" y="855">SIDE</text>
                        <text class="mode" x="306" y="880">插入模式</text>
                        <text class="note" x="867" y="551">按住<tspan class="mono">shift</tspan>键不放，创建一条分别约束在</text>
                        <text class="note" x="867" y="571">两条曲线上的直线，按鼠标中键确定</text>
                    </g>
                </svg>
                <div class="viewbar">
                    <button aria-label="重新调整"><svg><use href="#i-refit"/></svg></button>
                    <button aria-label="放大"><svg><use href="#i-zoomin"/></svg></button>
                    <button aria-label="缩小"><svg><use href="#i-zoomout"/></svg></button>
                    <button aria-label="重画"><svg><use href="#i-repaint"/></svg></button>
                    <button aria-label="显示样式"><svg><use href="#i-shade"/></svg></button>
                    <button aria-label="已保存方向"><svg><use href="#i-views"/></svg></button>
                    <button aria-label="视图管理器"><svg><use href="#i-viewmgr"/></svg></button>
                    <button aria-label="透视图"><svg><use href="#i-persp"/></svg></button>
                    <button aria-label="截面"><svg><use href="#i-section"/></svg></button>
                    <button aria-label="基准显示"><svg><use href="#i-datums"/></svg></button>
                    <button class="pressed" aria-label="注释显示"><svg><use href="#i-annot"/></svg></button>
                    <button class="pressed" aria-label="旋转中心"><svg><use href="#i-spin"/></svg></button>
                    <button aria-label="样式显示"><svg><use href="#i-styleeye"/></svg></button>
                    <button aria-label="栅格"><svg><use href="#i-grid"/></svg></button>
                    <button aria-label="活动平面方向"><svg><use href="#i-orient"/></svg></button>
                    <button aria-label="四视图"><svg><use href="#i-fourview"/></svg></button>
                    <button aria-label="镜像"><svg><use href="#i-mirror"/></svg></button>
                </div>
            </div>
        </main>

        <footer class="status">
            <button class="pressed" aria-label="导航器"><svg class="icon18"><use href="#i-navpane"/></svg></button>
            <button aria-label="浏览器"><svg class="icon18"><use href="#i-globe"/></svg></button>
            <button aria-label="全屏"><svg viewBox="0 0 18 18" class="icon18"><path d="M1.500 1.500H16.500V16.500H1.500Z" fill="url(#g-soft)" stroke="#2a6f93"/></svg></button>
            <div class="messages">
                <p><svg><use href="#i-arrow"/></svg>调整选项或单击"确定"完成操作。</p>
                <p><svg><use href="#i-arrow"/></svg>单击可选择曲线。拖动点 (按 SHIFT 捕捉，按 ALT 垂直拖动，按 SHIFT+ALT 延伸)。单击切线端点 (按 ALT 等距拖动两个端点切线)。右键单击点、切线或曲线可调出弹出式菜单。</p>
            </div>
            <div class="find">
                <button aria-label="查找"><svg class="icon18"><use href="#i-binoc"/></svg></button>
                <button class="drop off" aria-label="查找选项"><svg><use href="#i-down"/></svg></button>
            </div>
            <span class="count">选择了 1 项</span>
            <div class="pick">
                <select aria-label="选择过滤器"><option>全部</option></select>
                <svg class="small"><use href="#i-down"/></svg>
            </div>
            <svg class="grip" viewBox="0 0 12 12"><path d="M0 12L12 0M5 12L12 5M9 12L12 9" stroke="#aab0b0"/></svg>
        </footer>

        <div class="watermark">
            <svg viewBox="0 0 24 44"><path d="M8 43C20 36 8 24 5 10Q13 20 13 28C17 18 12 10 9 0C20 8 25 20 20 31Q16 40 8 43Z" fill="#f96332"/></svg>
            <p><span>野火</span>论坛</p>
            <small>www.proewildfire.cn</small>
        </div>
    </div>
</body>
</html>
```
FILE: styles.css
```css
* {
    box-sizing: border-box;
}
body {
    margin: 0;
    font-family: "Noto Sans", "Noto Sans CJK SC", sans-serif;
    font-size: 12px;
    line-height: 16px;
    color: #3f4445;
}
h1, h2, p, ul {
    margin: 0;
    padding: 0;
    font-weight: normal;
}
button, input, select {
    font: inherit;
    color: inherit;
}
button {
    display: flex;
    align-items: center;
    justify-content: center;
    padding: 0;
    border: 0;
    background: none;
}
a {
    color: inherit;
    text-decoration: none;
}
svg {
    flex: none;
}
.defs {
    position: absolute;
    width: 0;
    height: 0;
}
.icon {
    width: 16px;
    height: 16px;
}
.icon18 {
    width: 18px;
    height: 18px;
}
.small {
    width: 8px;
    height: 8px;
}
.pressed {
    background: #dcdee0;
    border: 1px solid #a9adaf;
}
.window {
    position: relative;
    display: flex;
    flex-direction: column;
    height: 100vh;
    border: 4px solid #a3a3a3;
    background: #f7fafb;
}

/* title bar */
.titlebar {
    display: flex;
    align-items: center;
    height: 28px;
    padding: 0 4px 0 8px;
    background: #d9dfdf;
}
.brand {
    width: 60px;
    padding-left: 4px;
    font-family: "Lato", sans-serif;
    font-size: 19px;
    line-height: 24px;
    color: #4d5354;
}
.brand sup {
    font-size: 8px;
    line-height: 8px;
}
.quick {
    display: flex;
    align-items: center;
}
.quick button {
    width: 24px;
    height: 24px;
}
.drop svg {
    width: 8px;
    height: 8px;
}
.quick .drop {
    width: 13px;
    color: #444;
}
.quick .drop.off, .off {
    color: #a4a6a6;
}
.quick .custom {
    width: 25px;
    border-left: 1px solid #9da3a3;
    margin-left: 2px;
}
.custom svg {
    border-top: 1px solid #333;
}
.titlebar h1 {
    flex: 1;
    margin-left: 131px;
    font-size: 13px;
    line-height: 18px;
    color: #444;
}
.winbtns {
    display: flex;
}
.winbtns button {
    width: 27px;
    height: 20px;
}
.winbtns svg {
    width: 12px;
    height: 12px;
}

/* ribbon tabs */
.tabs {
    display: flex;
    height: 29px;
    background: #3d4546;
    color: #fff;
    font-size: 13px;
    line-height: 29px;
}
.tabs a {
    padding: 0 24px 0 23px;
}
.tabs .file {
    padding: 0 20px;
    background: linear-gradient(160deg, #64d544, #4ba62f);
}
.tabs .style {
    width: 72px;
    margin-left: 8px;
    padding: 0;
    text-align: center;
    font-style: italic;
    background: #6f7f80;
    font-size: 15px;
}
.tabs .current {
    width: 142px;
    margin-left: 2px;
    padding: 0;
    text-align: center;
    font-style: italic;
    font-size: 15px;
    background: #f8f9fb;
    color: #3f4445;
}
.help-icons {
    display: flex;
    align-items: center;
    gap: 8px;
    margin-left: auto;
    padding: 0 8px 4px 0;
    line-height: 20px;
}
.help-icons svg:first-child {
    width: 11px;
    height: 11px;
    color: #ccc;
}
.help-icons b {
    margin-left: 4px;
    font-size: 14px;
}

/* ribbon */
.ribbon {
    display: flex;
    height: 113px;
    background: #f8f9fb;
    border-bottom: 1px solid #b0bcbc;
}
.tool-icon {
    width: 57px;
    margin: 2px 1px 2px 0;
    padding: 38px 0 0 12px;
    border-right: 1px solid #a7abab;
}
.tool-icon svg {
    width: 32px;
    height: 32px;
}
.dash {
    display: flex;
    flex-direction: column;
}
.groups {
    display: flex;
    flex: 1;
}
.group {
    margin: 4px 0;
    padding-left: 14px;
    border-right: 1px solid #d8dbdd;
}
.group h2 {
    margin-bottom: 6px;
    font-size: 12px;
    font-weight: 500;
    line-height: 14px;
    color: #444;
}
.g-curve {
    width: 231px;
    padding-left: 12px;
}
.g-type {
    width: 200px;
}
.g-set {
    width: 184px;
}
.g-sym, .g-op {
    width: 144px;
}
.g-op {
    width: 85px;
    border: 0;
}
.collector {
    justify-content: flex-start;
    gap: 4px;
    width: 201px;
    height: 26px;
    margin-left: 3px;
    padding: 0 6px;
    background: #eafcdc;
    border: 1px solid #b3b8b8;
    box-shadow: inset 0 0 0 2px #fff;
}
.types {
    display: flex;
    gap: 1px;
}
.types button {
    flex-direction: column;
    justify-content: flex-start;
    width: 56px;
    height: 60px;
    padding: 3px 2px 0;
    border-top: 3px solid #aaadaf;
    line-height: 17px;
}
.types svg {
    margin-bottom: 2px;
}
.types .on {
    background: #d4f2ff;
    border: 1px solid #70cdf8;
    border-top-width: 3px;
    padding: 3px 0 0;
}
.types button:disabled {
    border-color: #d3d5d6;
}
button:disabled, .plane {
    color: #b0b2b3;
}
.cmd {
    gap: 4px;
    height: 26px;
}
.group > .cmd {
    margin: 0 4px 2px;
}
.set-grid {
    display: grid;
    grid-template-columns: 75px max-content;
    row-gap: 2px;
    margin-left: 4px;
    justify-items: start;
}
.cmd.pressed {
    padding: 0 3px;
}
.degree, .plane {
    display: flex;
    align-items: center;
    gap: 3px;
}
.spin {
    display: flex;
    width: 51px;
    height: 26px;
    background: #fff;
    border: 1px solid #b3b8b8;
}
.spin input {
    width: 38px;
    border: 0;
    padding: 0 4px;
    background: none;
}
.steps {
    display: flex;
    flex-direction: column;
    justify-content: space-around;
}
.steps svg {
    width: 6px;
    height: 6px;
}
.plane input {
    width: 58px;
    height: 26px;
    background: #faf8fe;
    border: 1px solid #cdd0d2;
    box-shadow: inset 0 0 0 2px #fff;
}
.pause {
    display: flex;
    align-items: center;
    justify-content: center;
    width: 70px;
    margin: 2px 0;
    border: solid #a7abab;
    border-width: 0 1px;
}
.pause svg {
    width: 24px;
    height: 24px;
}
.finish {
    display: flex;
    padding: 24px 14px 0;
}
.finish button {
    flex-direction: column;
    justify-content: flex-start;
    gap: 6px;
    width: 40px;
}
.finish svg {
    width: 28px;
    height: 22px;
}
.subtabs {
    display: flex;
    height: 24px;
    margin-right: 2px;
    padding-left: 53px;
    background: #e8eaeb;
    line-height: 25px;
    color: #555;
}
.subtabs a {
    padding: 0 23px 0 24px;
    background: #dfe1e3;
    border: solid #fff;
    border-width: 0 0 0 1px;
}
.subtabs a:last-child {
    border-right-width: 1px;
}
.tip {
    display: flex;
    flex: 1;
    align-items: center;
    gap: 2px;
    margin: 2px 0;
    padding: 0 2px 0 13px;
    border-left: 1px solid #a7abab;
    color: #999;
}
.tip > svg {
    width: 8px;
    height: 8px;
}
.tip-box {
    display: flex;
    flex-direction: column;
    justify-content: space-between;
    align-items: flex-start;
    flex: 1;
    height: 91px;
    padding: 9px 7px;
    background: #dfe1e3;
    color: #444;
}
.tip-box a {
    color: #1b6fa8;
    text-decoration: underline;
}

/* navigator */
.work {
    display: flex;
    flex: 1;
    min-height: 0;
}
.sidebar {
    display: flex;
    flex-direction: column;
    width: 294px;
    border-right: 3px solid #d9dfdf;
}
.navtabs {
    display: flex;
    height: 26px;
    background: #d9dfdf;
}
.navtabs button {
    width: 32px;
}
.navtabs .on {
    background: #f7fafb;
}
.panel {
    display: flex;
    flex-direction: column;
    margin: 0 5px 0 8px;
    border-bottom: 3px solid #d9dfdf;
}
.model {
    height: 274px;
}
.layers {
    height: 179px;
}
.styles {
    flex: 1;
    min-height: 0;
    margin-bottom: 6px;
    border: 0;
}
.bar {
    display: flex;
    align-items: center;
    height: 32px;
    color: #444;
}
.bar button {
    width: 24px;
    height: 24px;
}
.bar .fold {
    width: 20px;
    color: #888;
}
.fold svg {
    width: 10px;
    height: 10px;
}
.bar .dots {
    width: 12px;
    height: 16px;
    margin-right: 15px;
}
.bar i {
    width: 1px;
    height: 24px;
    margin: 0 3px;
    background: #b0b5b7;
}
.bar .more {
    margin-left: auto;
    font-size: 16px;
    line-height: 20px;
}
.filter {
    display: flex;
    align-items: center;
    height: 28px;
    padding: 0 6px 0 4px;
    color: #555;
}
.filter-box {
    display: flex;
    flex: 1;
    height: 28px;
    margin: 0 5px 0 4px;
    border: 1px solid #a5b3b3;
    background: #fff;
}
.filter-box input {
    flex: 1;
    min-width: 0;
    border: 0;
}
.filter-box button {
    width: 18px;
    color: #999;
    font-size: 18px;
}
.plus {
    width: 12px;
    height: 12px;
    margin-left: 12px;
}
.scroll {
    display: flex;
    flex: 1;
    min-height: 0;
}
.model .scroll {
    margin: 6px 0 1px;
}
.tree {
    flex: 1;
    overflow: hidden;
    list-style: none;
    --line: #8347c0;
    --knot: #14789c;
    --plane: #7b5a1d;
}
.tree li {
    display: flex;
    align-items: center;
    height: 22px;
    padding-left: 23px;
    /* branch line and its stub */
    background:
        linear-gradient(#c6cacc, #c6cacc) 11px 0 / 1px 100% no-repeat,
        linear-gradient(#c6cacc, #c6cacc) 11px 11px / 9px 1px no-repeat;
}
.tree .icon {
    margin-right: 5px;
}
.tree .icon18 {
    margin-right: 7px;
}
.tree .root {
    height: 22px;
    padding-left: 3px;
    background: none;
}
.tree .open {
    background:
        linear-gradient(#c6cacc, #c6cacc) 11px 0 / 1px 5px no-repeat,
        linear-gradient(#c6cacc, #c6cacc) 11px 100% / 1px 5px no-repeat;
}
.tree .open::before {
    content: "";
    width: 0;
    margin: 0 9px 0 -13px;
    border: 4px solid transparent;
    border-left-color: #555;
    border-right-width: 0;
}
.tree .hidden {
    color: #bfb49c;
    --line: #a9aaa8;
    --knot: #a9a08c;
    --plane: #a9aaa8;
}
.tree .hidden .icon18 {
    opacity: .4;
}
.tree .cut {
    height: 21px;
}
.tree .star {
    width: 8px;
    height: 8px;
    margin-bottom: 6px;
}
.dense li {
    height: 20px;
}
.tree.dense .root {
    height: 17px;
    padding-left: 2px;
}
.sb {
    display: flex;
    flex-direction: column;
    width: 15px;
    background: #e0e1e3;
    border: 1px solid #cfd2d4;
    color: #999;
}
.sb svg {
    width: 13px;
    height: 14px;
    padding: 3px 2px;
    background: #f8f8f8;
}
.sb span {
    background: #fafafa;
    border: solid #c6c9cb;
    border-width: 1px 0;
}
.sb::before, .sb::after {
    content: "";
}
.sb svg:first-of-type {
    order: -1;
}
.sb svg:last-of-type {
    order: 1;
}
.sb-model span {
    flex: 126;
}
.sb-model::after {
    flex: 49;
}
.sb-layers::before {
    flex: 3;
}
.sb-layers span {
    flex: 57;
}
.sb-layers::after {
    flex: 31;
}
.sb-styles::before {
    flex: 156;
}
.sb-styles span {
    flex: 85;
}
.sb-styles::after {
    flex: 15;
}
.model-pick {
    display: flex;
    align-items: center;
    height: 25px;
    border: 1px solid #cfd2d4;
    color: #b0b2b3;
}
.model-pick button {
    width: 24px;
    height: 23px;
    background: #e8eaeb;
    border-right: 1px solid #cfd2d4;
}
.model-pick select {
    flex: 1;
    height: 23px;
    padding: 0 7px;
    border: 0;
    border-right: 1px solid #cfd2d4;
    background: none;
    color: #b0b2b3;
    opacity: 1;
    appearance: none;
}
.model-pick .small {
    margin: 0 3px;
}

/* graphics area */
.canvas {
    position: relative;
    flex: 1;
    min-width: 0;
    background: #fff;
}
.scene {
    display: block;
    width: 100%;
    height: 100%;
}
.datum {
    font-family: "Noto Sans CJK SC", sans-serif;
    font-size: 16px;
    font-weight: 300;
    fill: #996633;
}
.mode {
    font-size: 8px;
    fill: #444;
}
.note {
    font-family: "Noto Sans CJK SC", sans-serif;
    font-size: 20px;
    font-weight: 300;
    fill: #f01010;
}
.note .mono {
    font-family: "Liberation Mono", monospace;
    font-size: 17px;
    font-weight: 400;
}
.viewbar {
    position: absolute;
    top: 7px;
    left: 301px;
    display: flex;
    gap: 2px;
    padding: 3px;
    background: #f8f9fb;
    border: 1px solid #a3a7a8;
}
.viewbar button {
    width: 24px;
    height: 24px;
}
.viewbar svg {
    width: 18px;
    height: 18px;
}

/* status bar */
.status {
    display: flex;
    align-items: center;
    height: 47px;
    padding: 13px 2px 0 5px;
    background: #f5f9fa;
    border-top: 1px solid #b0bcbc;
}
.status > button {
    width: 24px;
    height: 24px;
    margin-right: 2px;
}
.messages {
    flex: 1;
    align-self: flex-end;
    margin: 0 4px 0 6px;
    padding: 0 0 6px 3px;
    border: solid #b0b5b7;
    border-width: 0 1px;
    font-size: 11px;
    white-space: nowrap;
}
.messages p {
    display: flex;
    align-items: center;
    gap: 1px;
}
.messages svg {
    width: 12px;
    height: 12px;
}
.find {
    display: flex;
    height: 26px;
    padding: 0 2px;
    border: solid #b0b5b7;
    border-width: 0 1px;
}
.find button {
    width: 28px;
    border: 1px solid #cfd2d4;
}
.find .drop {
    width: 15px;
    margin-left: -1px;
}
.count {
    width: 98px;
    padding-left: 4px;
}
.pick {
    display: flex;
    align-items: center;
    width: 176px;
    height: 24px;
    border: 1px solid #a9adaf;
    background: #f8f9fb;
}
.pick select {
    flex: 1;
    height: 22px;
    padding: 0 7px;
    border: 0;
    border-right: 1px solid #a9adaf;
    background: none;
    appearance: none;
}
.pick .small {
    margin: 0 3px;
}
.grip {
    align-self: flex-end;
    width: 12px;
    height: 12px;
    margin: 0 0 3px 4px;
}

/* forum mark laid over the corner */
.watermark {
    position: absolute;
    right: 12px;
    bottom: 1px;
    width: 168px;
    color: #000;
    pointer-events: none;
}
.watermark svg {
    position: absolute;
    top: -20px;
    left: 58px;
    width: 24px;
    height: 44px;
}
.watermark p {
    font-size: 41px;
    font-style: italic;
    font-weight: 300;
    line-height: 40px;
    white-space: nowrap;
}
.watermark span {
    color: #f96332;
}
.watermark small {
    display: block;
    font-family: "DejaVu Sans", sans-serif;
    font-size: 16px;
    font-style: italic;
    line-height: 20px;
    color: #8d9394;
}
```
